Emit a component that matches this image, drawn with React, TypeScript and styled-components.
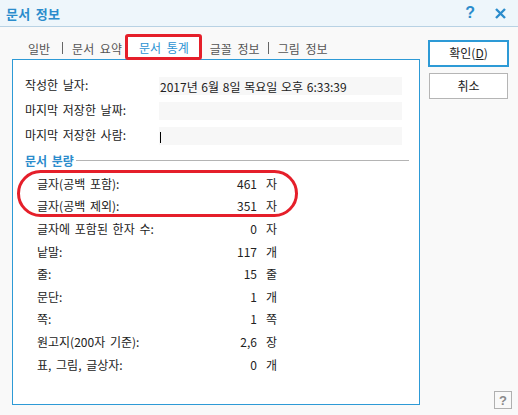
import React from "react";
import styled, { createGlobalStyle } from "styled-components";

const GlobalStyle = createGlobalStyle`
  html, body { margin: 0; padding: 0; background: #f9f9f9; }
  body {
    font-family: "Noto Sans CJK KR", "Noto Sans", sans-serif;
    font-size: 12px;
    color: #222;
    word-spacing: 2px;
  }
`;

const Dialog = styled.div`
  width: 518px;
  height: 415px;
  display: flex;
  flex-direction: column;
  background: #f9f9f9;
  overflow: hidden;
`;

const TitleBar = styled.div`
  height: 26px;
  flex: none;
  display: flex;
  align-items: center;
  padding: 0 12px 0 6px;
  background: #eef6fb;
  border-bottom: 1px solid #b8d2e4;
`;

const Title = styled.div`
  font-size: 13px;
  font-weight: 700;
  color: #2b8ccc;
  letter-spacing: 0.3px;
  flex: 1;
`;

const TitleHelp = styled.span`
  font-family: "Liberation Sans", Arial, sans-serif;
  font-weight: 700;
  font-size: 16px;
  color: #2b8ccc;
  margin-right: 20px;
`;

const Body = styled.div`
  flex: 1;
  display: flex;
  min-height: 0;
`;

const LeftColumn = styled.div`
  width: 420px;
  display: flex;
  flex-direction: column;
  padding-bottom: 10px;
`;

const TabRow = styled.div`
  height: 32px;
  display: flex;
  align-items: flex-end;
  padding-left: 28px;
  position: relative;
  z-index: 1;
  word-spacing: 3px;
`;

const Tab = styled.div<{ $active?: boolean; $gap?: number }>`
  margin-left: ${(p) => p.$gap ?? 0}px;
  display: flex;
  align-items: center;
  white-space: nowrap;
  color: ${(p) => (p.$active ? "#2b93d3" : "#555")};
  height: ${(p) => (p.$active ? "20px" : "22px")};
  ${(p) =>
    p.$active
      ? `
    border: 3px solid #e51f2a;
    border-radius: 3px;
    background: #fff;
    padding: 0 10px 0 11px;
    margin-bottom: -1px;
  `
      : ""}
`;

const TabSep = styled.div<{ $gap: number }>`
  width: 1px;
  height: 12px;
  background: #666;
  margin: 0 9px 5px ${(p) => p.$gap}px;
`;

const Panel = styled.div`
  margin-left: 12px;
  flex: 1;
  background: #fff;
  border: 1px solid #2d9ad6;
  display: flex;
  flex-direction: column;
  padding: 17px 17px 0 12px;
`;

const FieldList = styled.div`
  display: flex;
  flex-direction: column;
  gap: 7px;
`;

const FieldRow = styled.div`
  display: flex;
  align-items: center;
  height: 18px;
`;

const FieldLabel = styled.div`
  width: 134px;
  flex: none;
  padding-bottom: 4px;
  white-space: nowrap;
`;

const FieldValue = styled.div`
  flex: 1;
  height: 18px;
  background: #f7f7f7;
  display: flex;
  align-items: center;
  padding-left: 1px;
  white-space: nowrap;
  color: #222;
  word-spacing: 1px;
`;

const Caret = styled.span`
  width: 1px;
  height: 11px;
  background: #000;
  margin-top: 2px;
`;

const SectionHeader = styled.div`
  margin-top: 7px;
  height: 16px;
  display: flex;
  align-items: center;
  gap: 2px;
  margin-right: -7px;
`;

const SectionTitle = styled.span`
  font-weight: 700;
  color: #2b8ccc;
  white-space: nowrap;
`;

const SectionLine = styled.div`
  flex: 1;
  height: 1px;
  background: #b4b4b4;
  margin-top: 1px;
`;

const StatList = styled.div`
  position: relative;
  margin-top: 4px;
  padding-left: 12px;
  display: flex;
  flex-direction: column;
`;

const StatRow = styled.div`
  height: 22.6px;
  display: flex;
  align-items: center;
  white-space: nowrap;
`;

const StatLabel = styled.span`
  width: 180px;
`;

const StatValue = styled.span`
  width: 40px;
  text-align: right;
`;

const StatUnit = styled.span`
  margin-left: 9px;
`;

const Highlight = styled.div`
  position: absolute;
  left: -8px;
  top: -2px;
  width: 275px;
  height: 41px;
  border: 3px solid #e51f2a;
  border-radius: 24px;
  pointer-events: none;
`;

const RightColumn = styled.div`
  flex: 1;
  display: flex;
  flex-direction: column;
  padding: 13px 6px 6px 8px;
`;

const Button = styled.button<{ $primary?: boolean }>`
  height: ${(p) => (p.$primary ? "27px" : "26px")};
  background: #fff;
  border: ${(p) => (p.$primary ? "2px solid #2d9ad6" : "1px solid #b5b5b5")};
  margin: 0 0 6px ${(p) => (p.$primary ? "0" : "1px")};
  width: ${(p) => (p.$primary ? "81px" : "79px")};
  padding: 0 0 2px;
  font-family: inherit;
  font-size: 12px;
  color: #222;
  display: flex;
  align-items: center;
  justify-content: center;
`;

const Underline = styled.span`
  text-decoration: underline;
`;

const HelpButton = styled.div`
  margin-top: auto;
  align-self: flex-end;
  width: 16px;
  height: 16px;
  border: 1px solid #b0b0b0;
  display: flex;
  align-items: center;
  justify-content: center;
  font-family: "Liberation Sans", Arial, sans-serif;
  font-weight: 700;
  font-size: 13px;
  color: #8a8a8a;
  background: #f9f9f9;
`;

const fields: { label: string; value?: string; caret?: boolean }[] = [
  { label: "작성한 날자:", value: "2017년 6월 8일 목요일 오후 6:33:39" },
  { label: "마지막 저장한 날짜:" },
  { label: "마지막 저장한 사람:", caret: true },
];

const stats: [string, string, string][] = [
  ["글자(공백 포함):", "461", "자"],
  ["글자(공백 제외):", "351", "자"],
  ["글자에 포함된 한자 수:", "0", "자"],
  ["낱말:", "117", "개"],
  ["줄:", "15", "줄"],
  ["문단:", "1", "개"],
  ["쪽:", "1", "쪽"],
  ["원고지(200자 기준):", "2,6", "장"],
  ["표, 그림, 글상자:", "0", "개"],
];

export default function App() {
  return (
    <>
      <GlobalStyle />
      <Dialog>
        <TitleBar>
          <Title>문서 정보</Title>
          <TitleHelp>?</TitleHelp>
          <svg width="11" height="11" viewBox="0 0 11 11">
            <path d="M1 1 L10 10 M10 1 L1 10" stroke="#2b8ccc" strokeWidth="2.4" />
          </svg>
        </TitleBar>
        <Body>
          <LeftColumn>
            <TabRow>
              <Tab>일반</Tab>
              <TabSep $gap={12} />
              <Tab>문서 요약</Tab>
              <Tab $active $gap={3}>문서 통계</Tab>
              <Tab $gap={8}>글꼴 정보</Tab>
              <TabSep $gap={8} />
              <Tab>그림 정보</Tab>
            </TabRow>
            <Panel>
              <FieldList>
                {fields.map((f) => (
                  <FieldRow key={f.label}>
                    <FieldLabel>{f.label}</FieldLabel>
                    <FieldValue>
                      {f.value}
                      {f.caret && <Caret />}
                    </FieldValue>
                  </FieldRow>
                ))}
              </FieldList>
              <SectionHeader>
                <SectionTitle>문서 분량</SectionTitle>
                <SectionLine />
              </SectionHeader>
              <StatList>
                <Highlight />
                {stats.map(([label, value, unit]) => (
                  <StatRow key={label}>
                    <StatLabel>{label}</StatLabel>
                    <StatValue>{value}</StatValue>
                    <StatUnit>{unit}</StatUnit>
                  </StatRow>
                ))}
              </StatList>
            </Panel>
          </LeftColumn>
          <RightColumn>
            <Button $primary>
              확인(<Underline>D</Underline>)
            </Button>
            <Button>취소</Button>
            <HelpButton>?</HelpButton>
          </RightColumn>
        </Body>
      </Dialog>
    </>
  );
}
